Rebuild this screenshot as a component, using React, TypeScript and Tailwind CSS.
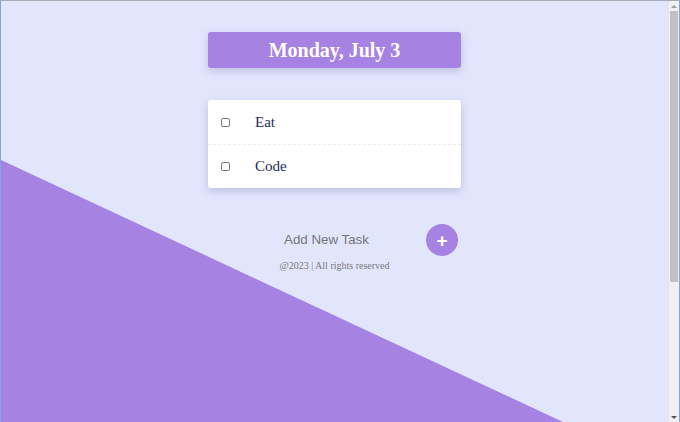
const tasks = ['Eat', 'Code'];

function Scrollbar() {
  return (
    <div className="flex w-[10px] shrink-0 flex-col bg-[#f0f0f0]">
      <div className="flex h-[10px] items-center justify-center">
        <div className="h-0 w-0 border-x-[3px] border-b-[3px] border-x-transparent border-b-[#a0a0a0]" />
      </div>
      <div className="mx-[1px] h-[271px] bg-[#c1c1c1]" />
      <div className="flex-1" />
      <div className="flex h-[10px] items-center justify-center">
        <div className="h-0 w-0 border-x-[3px] border-t-[3px] border-x-transparent border-t-[#505060]" />
      </div>
    </div>
  );
}

export default function App() {
  return (
    <div className="flex h-[422px] w-[680px] overflow-hidden border-t border-x border-t-[#a9adb8] border-x-[#7aa7e6] bg-[#e2e6fc]">
      <main className="relative flex-1 overflow-hidden">
        <svg className="absolute inset-0" width="668" height="421" aria-hidden="true">
          <polygon points="0,159 562,421 0,421" fill="#a682e2" />
        </svg>
        <div className="relative flex flex-col items-center pr-[1px] pt-[31px]">
          <h1 className="flex h-[36px] w-[253px] items-center justify-center rounded-[3px] bg-[#a682e2] font-['Liberation_Serif',serif] text-[20px] font-bold text-white shadow-[0_3px_8px_rgba(80,70,140,0.25)]">
            Monday, July 3
          </h1>
          <ul className="mt-[32px] w-[253px] rounded-[3px] bg-white shadow-[0_3px_8px_rgba(80,70,140,0.25)]">
            {tasks.map((task, i) => (
              <li
                key={task}
                className={`flex h-[44px] items-center ${i > 0 ? 'border-t border-dashed border-[#ececf2]' : ''}`}
              >
                <span className="ml-[13px] h-[9px] w-[9px] rounded-[2px] border border-[#7a7a86] bg-white" />
                <span className="ml-[25px] font-['Liberation_Serif',serif] text-[15px] text-[#1f2a5c]">{task}</span>
              </li>
            ))}
          </ul>
          <div className="mt-[36px] flex w-[253px] items-center">
            <input
              type="text"
              placeholder="Add New Task"
              className="ml-[74px] w-[140px] bg-transparent px-[2px] font-['Liberation_Sans',sans-serif] text-[13.33px] text-[#333] outline-none placeholder:text-[#757575]"
            />
            <button className="ml-auto mr-[3px] flex h-[32px] w-[32px] items-center justify-center rounded-full bg-[#a682e2] font-['Liberation_Sans',sans-serif] text-[19px] font-bold leading-none text-white">
              +
            </button>
          </div>
          <p className="mt-[3px] font-['Liberation_Serif',serif] text-[10px] leading-[13px] text-[#7a7a7a]">@2023 | All rights reserved</p>
        </div>
      </main>
      <Scrollbar />
    </div>
  );
}
